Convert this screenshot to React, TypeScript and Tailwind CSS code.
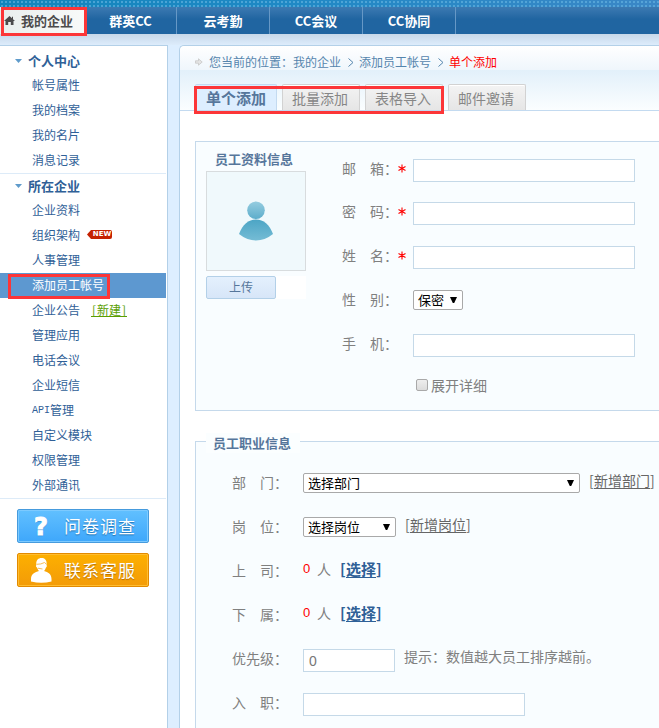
import type { ReactNode } from 'react'

interface MenuItem {
  label: string
  badge?: 'new' | 'create'
  active?: boolean
}

const navItems = ['群英CC', '云考勤', 'CC会议', 'CC协同']

const personalMenu: MenuItem[] = [
  { label: '帐号属性' },
  { label: '我的档案' },
  { label: '我的名片' },
  { label: '消息记录' },
]

const companyMenu: MenuItem[] = [
  { label: '企业资料' },
  { label: '组织架构', badge: 'new' },
  { label: '人事管理' },
  { label: '添加员工帐号', active: true },
  { label: '企业公告', badge: 'create' },
  { label: '管理应用' },
  { label: '电话会议' },
  { label: '企业短信' },
  { label: 'API管理' },
  { label: '自定义模块' },
  { label: '权限管理' },
  { label: '外部通讯' },
]

const tabs = ['批量添加', '表格导入', '邮件邀请']

function NewBadge() {
  return (
    <span className="mb-px ml-[7px] flex h-[9px] items-center">
      <svg width="5" height="9" viewBox="0 0 5 9">
        <path d="M5 0H4L0 4.5L4 9H5Z" fill="#c52100" />
      </svg>
      <span className="h-[9px] w-5 rounded-r-[2px] bg-[#c52100] text-center font-['DejaVu_Sans'] text-[7px] leading-[9px] font-bold text-white">
        NEW
      </span>
    </span>
  )
}

function MenuGroup({ title, items }: { title: string; items: MenuItem[] }) {
  return (
    <div className="w-[166px] border-b border-[#ddebf8]">
      <div className="flex h-6 items-center pl-[15px] text-[13px] font-bold text-[#2f6097]">
        <svg width="7" height="4" viewBox="0 0 7 4" className="mr-[6px]">
          <path d="M0 0H7L3.5 4Z" fill="#5f9bcb" />
        </svg>
        {title}
      </div>
      {items.map((item) => (
        <div
          key={item.label}
          className={
            item.active
              ? 'flex h-[25px] items-center bg-[#5d98d0] pb-[2px] pl-8 text-white'
              : 'flex h-[25px] items-center pb-[2px] pl-8 text-[#2f6097]'
          }
        >
          {item.label === 'API管理' ? (
            <>
              <span className="pt-px font-['Liberation_Mono'] text-[10px]">API</span>管理
            </>
          ) : (
            item.label
          )}
          {item.badge === 'new' && <NewBadge />}
          {item.badge === 'create' && (
            <span className="ml-[11px] flex border-b border-[#5a9e00] leading-[13px] text-[#5a9e00]">
              <span className="w-[6px] text-center">[</span>新建
              <span className="w-[6px] text-center">]</span>
            </span>
          )}
        </div>
      ))}
    </div>
  )
}

// Two-character labels are spread with a full-width space
function Row({ label, required, children }: { label: string; required?: boolean; children?: ReactNode }) {
  return (
    <div className="flex h-11 items-center">
      <span className="mb-[5px] w-14 shrink-0 text-sm leading-5 whitespace-pre text-[#808080]">{label}</span>
      <span className="mb-[3px] flex w-[15px] shrink-0 justify-center">
        {required && (
          <svg width="8" height="9" viewBox="0 0 8 9" className="mr-[7px] shrink-0">
            <path d="M4 0.5V8.5M0.5 2.5L7.5 6.5M7.5 2.5L0.5 6.5" stroke="#f00" strokeWidth="1.1" />
          </svg>
        )}
      </span>
      {children}
    </div>
  )
}

function TextBox({ className }: { className: string }) {
  return <div className={`h-[23px] border border-[#c5d9e8] bg-white ${className}`} />
}

function Select({ value, className }: { value: string; className: string }) {
  return (
    <div
      className={`mb-[2px] flex h-5 items-center justify-between rounded-[2px] border border-[#a9a9a9] bg-white pr-[5px] pl-1 text-[13px] text-black ${className}`}
    >
      {value}
      <svg width="7" height="6" viewBox="0 0 7 6" className="mb-px">
        <path d="M0 0H7L4.2 6H2.8Z" fill="#000" />
      </svg>
    </div>
  )
}

function AddLink({ text }: { text: string }) {
  return (
    <span className="mb-2 ml-[9px] flex text-sm leading-5 text-[#666]">
      <span className="w-[5px]">[</span>
      <span className="underline underline-offset-2">{text}</span>
      <span className="w-[5px]">]</span>
    </span>
  )
}

function PeoplePicker() {
  return (
    <span className="mb-[7px] flex items-center text-sm leading-5 text-[#808080]">
      <span className="w-[14px] font-['Liberation_Sans'] text-[13px] text-[#f00]">0</span>人
      <span className="ml-[9px] flex text-[15px] font-bold text-[#2f6097]">
        <span className="w-[6px]">[</span>
        <span className="underline underline-offset-2">选择</span>
        <span>]</span>
      </span>
    </span>
  )
}

function Chevron() {
  return (
    <svg width="6" height="9" viewBox="0 0 6 9" className="mr-[5px] ml-[7px]">
      <path d="M0.5 0.5L5 4.5L0.5 8.5" fill="none" stroke="#5585ad" />
    </svg>
  )
}

export default function App() {
  return (
    <div className="relative flex h-[728px] w-[659px] flex-col overflow-hidden bg-[#ddeeff] font-['Noto_Sans_CJK_SC',sans-serif] text-xs leading-normal">
      {/* Top bar */}
      <div className="h-[7px] shrink-0 bg-[radial-gradient(circle_at_center,#65b3e0_0.6px,transparent_0.9px),linear-gradient(to_right,#1285bb,#2089c5_45%,#3b87c6)] bg-[length:4px_4px,100%_100%]" />
      <nav className="flex h-[27px] shrink-0 bg-linear-to-b from-[#3c7ab2] to-[#2065a1] to-45% text-[13px] font-bold text-white">
        <div className="flex w-[85px] items-center bg-linear-to-r from-[#e9efed] to-[#f8faf9] pl-1 text-[#4b4b4b]">
          <svg width="11" height="9" viewBox="0 0 11 9" className="mr-[6px]">
            <path d="M5.5 0L0 5H1.5V9H4.2V6H6.8V9H9.5V5H11L9 3.2V0.8H8V2.3Z" fill="#4b4b4b" />
          </svg>
          我的企业
        </div>
        {navItems.map((item, i) => (
          <div
            key={item}
            className={`flex items-center justify-center border-r border-[#6698c6] ${i === 0 ? 'w-[92px]' : 'w-[93px]'}`}
          >
            {item}
          </div>
        ))}
      </nav>
      <div className="h-[11px] shrink-0 bg-linear-to-b from-[#c7d8ea] to-[#ddecfb]" />

      <div className="flex flex-1">
        {/* Sidebar */}
        <aside className="w-[168px] shrink-0 border-t border-r border-[#b3d0e8] bg-white pt-[3px]">
          <MenuGroup title="个人中心" items={personalMenu} />
          <MenuGroup title="所在企业" items={companyMenu} />
          <div className="mt-[10px] ml-[17px] flex h-[34px] w-[132px] items-center rounded-[2px] border border-[#469bdd] bg-linear-to-b from-[#61c0ff] to-[#3ea7fb] text-[17px] text-white shadow-[inset_0_0_0_1px_#7ccaff] [text-shadow:0_1px_1px_#2374b5]">
            <span className="w-[46px] pt-[2px] text-center font-['DejaVu_Sans'] text-[24px] leading-8 font-bold [-webkit-text-stroke:1px_white]">
              ?
            </span>
            <span className="tracking-[1px]">问卷调查</span>
          </div>
          <div className="mt-[10px] ml-[17px] flex h-[34px] w-[132px] items-center rounded-[2px] border border-[#e28a00] bg-linear-to-b from-[#fdb000] to-[#f39b08] text-[17px] text-white shadow-[inset_0_0_0_1px_#ffbd30] [text-shadow:0_1px_1px_#b36b00]">
            <svg width="21" height="25" viewBox="0 0 21 25" className="mr-[12px] ml-[13px]">
              <path
                d="M10.5 0C7 0 5 2.5 5.3 6L5 8.5L6.3 10C6.7 11.5 7.5 12.5 8 13C4 14 0 16 0 21V23.5Q10.5 26 20.5 23.5V21C20.5 16 17 14 13 13C13.8 12.3 14.3 11.5 14.7 10L15.8 8.5L15.6 6C16 2.5 14 0 10.5 0Z"
                fill="#fff"
              />
              <path d="M5.5 6.3Q10 6.5 13.5 4.5L15.5 6.3M7 10.2L11.5 11" fill="none" stroke="#f5b545" strokeWidth="0.9" />
            </svg>
            <span className="tracking-[1px]">联系客服</span>
          </div>
        </aside>

        {/* Main panel */}
        <main className="ml-[11px] w-[490px] shrink-0 rounded-tl-[5px] border-t border-l border-[#b3d0e8] bg-white">
          <div className="flex h-6 items-center rounded-tl-[5px] bg-linear-to-b from-white to-[#eff6fc] pt-2 pl-[15px] text-[#5585ad]">
            <svg width="8" height="8" viewBox="0 0 8 8" className="mr-[6px]">
              <path d="M0.5 2.8H3.5V0.8L7.2 4L3.5 7.2V5.2H0.5Z" fill="#e5e5e5" stroke="#c6c6c6" strokeWidth="0.8" />
            </svg>
            您当前的位置：我的企业
            <Chevron />
            添加员工帐号
            <Chevron />
            <span className="text-[#f00]">单个添加</span>
          </div>
          <div className="flex h-[41px] items-end border-b border-[#c3daf0] bg-linear-to-b from-[#e2f0fa] to-[#fbfeff] pl-[15px] text-sm text-[#868686]">
            <div className="flex h-[26px] w-[82px] items-center justify-center rounded-t-[2px] border border-b-0 border-[#c3daf0] bg-[#ddeeff] pt-px text-[15px] font-bold text-[#56769b]">
              单个添加
            </div>
            {tabs.map((tab) => (
              <div
                key={tab}
                className="ml-[5px] flex h-[26px] w-[78px] items-center justify-center rounded-t-[2px] border border-b-0 border-[#d2d2d2] bg-linear-to-b from-[#f3f3f3] to-[#e6e6e6] pt-px pr-[2px] shadow-[inset_0_1px_0_#fff]"
              >
                {tab}
              </div>
            ))}
          </div>

          {/* Employee profile */}
          <section className="mt-[30px] ml-[15px] flex h-[270px] w-[480px] border border-[#c5d9eb] bg-[#f9fdff]">
            <div className="ml-[10px] w-[100px]">
              <h2 className="-mt-[1px] pt-[7px] pl-[9px] text-[13px] leading-[21px] font-bold text-[#56769b]">
                员工资料信息
              </h2>
              <div className="mt-[2px] flex h-[100px] w-[100px] items-center justify-center border border-[#d8dcde] bg-[#f0f9fc]">
                <svg width="34" height="40" viewBox="0 0 34 40">
                  <defs>
                    <linearGradient id="head" x1="0" y1="0" x2="0" y2="1">
                      <stop offset="0" stopColor="#96cde0" />
                      <stop offset="1" stopColor="#5dadcb" />
                    </linearGradient>
                    <linearGradient id="body" x1="0" y1="0" x2="0" y2="1">
                      <stop offset="0" stopColor="#4ca5c5" />
                      <stop offset="1" stopColor="#75bcd5" />
                    </linearGradient>
                  </defs>
                  <circle cx="17" cy="9.2" r="8.8" fill="url(#head)" />
                  <path d="M0 33C3.5 23.5 9.5 18.5 17 18.5S30.5 23.5 34 33Q26 39.5 17 39.5T0 33Z" fill="url(#body)" />
                </svg>
              </div>
              <div className="mt-[5px] bg-white">
                <div className="flex h-[23px] w-[70px] items-center justify-center rounded-[2px] border border-[#b3d0e8] bg-linear-to-b from-[#e4f0fd] to-[#d7e6f8] pb-px text-[#56769b]">
                  上传
                </div>
              </div>
            </div>
            <div className="ml-9 pt-[6px]">
              <Row label="邮　箱：" required>
                <TextBox className="w-[222px]" />
              </Row>
              <div className="-mt-px">
                <Row label="密　码：" required>
                  <TextBox className="w-[222px]" />
                </Row>
                <Row label="姓　名：" required>
                  <TextBox className="w-[222px]" />
                </Row>
                <Row label="性　别：">
                  <Select value="保密" className="w-[50px]" />
                </Row>
                <Row label="手　机：">
                  <TextBox className="w-[222px]" />
                </Row>
              </div>
              <div className="flex h-9 items-center pl-[74px] text-sm text-[#808080]">
                <span className="mr-[3px] h-3 w-3 rounded-[2px] border border-[#a9a9a9] bg-linear-to-b from-[#eee] to-[#dcdcdc]" />
                展开详细
              </div>
            </div>
          </section>

          {/* Employee job */}
          <section className="relative mt-[30px] ml-[15px] h-[320px] w-[480px] border border-[#c5d9eb] bg-[#f9fdff] pt-5 pl-9">
            <h2 className="absolute -top-[9px] left-[10px] w-[94px] bg-[#fbfeff] pl-[7px] text-[13px] leading-5 font-bold text-[#56769b]">
              员工职业信息
            </h2>
            <Row label="部　门：">
              <Select value="选择部门" className="w-[277px]" />
              <AddLink text="新增部门" />
            </Row>
            <Row label="岗　位：">
              <Select value="选择岗位" className="w-[93px]" />
              <AddLink text="新增岗位" />
            </Row>
            <Row label="上　司：">
              <PeoplePicker />
            </Row>
            <Row label="下　属：">
              <PeoplePicker />
            </Row>
            <Row label="优先级：">
              <div className="flex h-[23px] w-[92px] items-center border border-[#c5d9e8] bg-white pt-px pl-[5px] font-['Liberation_Sans'] text-sm text-[#777]">
                0
              </div>
              <span className="mb-2 ml-[9px] text-sm text-[#808080]">提示：数值越大员工排序越前。</span>
            </Row>
            <Row label="入　职：">
              <TextBox className="w-[222px]" />
            </Row>
          </section>
        </main>
      </div>

      {/* Highlight frames */}
      <div className="absolute top-[7px] left-px h-[29px] w-[86px] border-3 border-[#fc3638]" />
      <div className="absolute top-[86px] left-[194px] h-7 w-[250px] border-3 border-[#fc3638]" />
      <div className="absolute top-[274px] left-2 h-[25px] w-[102px] border-3 border-[#fc3638]" />
    </div>
  )
}
